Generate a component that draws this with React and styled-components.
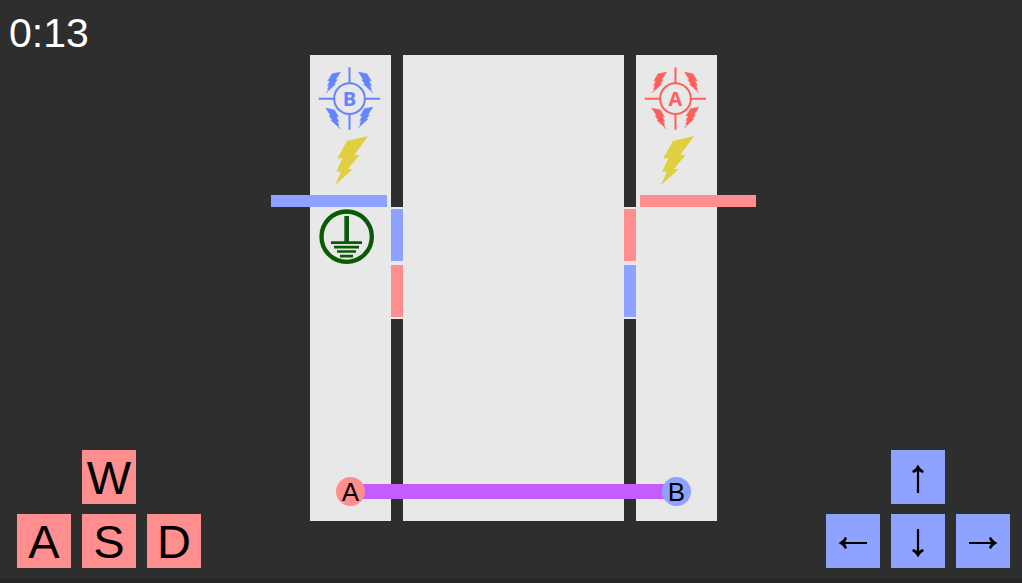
import React from "react";
import styled, { createGlobalStyle } from "styled-components";

const color = {
  floor: "#2e2e2e",
  edge: "#272727",
  lane: "#e8e8e8",
  red: "#ff8e8e",
  blue: "#8ea2ff",
  redIcon: "#ff5f5c",
  blueIcon: "#6384ff",
  rope: "#c45cff",
  bolt: "#e0d03f",
  ground: "#0a5a05",
};

const GlobalStyle = createGlobalStyle`
  *, *::before, *::after { box-sizing: border-box; }
  body {
    margin: 0;
    background: ${color.floor};
    font-family: "Liberation Sans", Arial, sans-serif;
  }
`;

const Page = styled.div`
  display: flex;
  flex-direction: column;
  min-height: 100vh;
  overflow: hidden;
  border-bottom: 4px solid ${color.edge};
`;

const Header = styled.header`
  padding: 8px 9px 0;
  height: 55px;
`;

const Timer = styled.time`
  display: block;
  color: #fff;
  font-size: 41px;
  line-height: 50px;
`;

const Stage = styled.main`
  flex: 1;
  display: grid;
  grid-template-columns: 1fr auto 1fr;
  padding: 0 12px 11px 17px;
`;

const KeyPad = styled.div`
  align-self: end;
  justify-self: ${(p) => p.$side};
  display: grid;
  grid-template-areas: ". up ." "left down right";
  gap: 10px 11px;
`;

const Key = styled.button`
  grid-area: ${(p) => p.$area};
  width: 54px;
  height: 54px;
  padding: 0;
  border: 0;
  background: ${(p) => color[p.$tone]};
  color: #000;
  font-family: inherit;
  font-size: 47px;
  line-height: 55px;
  text-align: center;
`;

const ArrowSvg = styled.svg`
  display: block;
  width: 54px;
  height: 54px;
`;

const Arena = styled.section`
  position: relative;
  align-self: start;
  display: grid;
  grid-template-columns: 81px 12px 221px 12px 81px;
  height: 466px;
`;

const Lane = styled.div`
  position: relative;
  display: flex;
  flex-direction: column;
  align-items: flex-start;
  padding: 12px 8px 0;
  background: ${color.lane};
`;

const Wall = styled.div`
  display: flex;
  flex-direction: column;
  background: ${color.floor};
`;

const Doorway = styled.div`
  display: flex;
  flex-direction: column;
  justify-content: space-between;
  height: 112px;
  margin-top: 152px;
  padding: 2px 0;
  background: ${color.lane};
`;

const Door = styled.div`
  height: 52px;
  background: ${(p) => color[p.$tone]};
`;

const Barrier = styled.div`
  position: absolute;
  top: 140px;
  ${(p) => p.$side}: -39px;
  width: 116px;
  height: 12px;
  background: ${(p) => color[p.$tone]};
`;

const TargetSvg = styled.svg`
  display: block;
  width: 63px;
  height: 63px;
`;

const TargetLetter = styled.text`
  font-family: "Open Sans", "Noto Sans", sans-serif;
  font-size: 20px;
  font-weight: 700;
  text-anchor: middle;
`;

const BoltSvg = styled.svg`
  display: block;
  width: 33px;
  height: 49px;
  margin: 6px 0 0 17px;
  overflow: visible;
`;

const GroundSvg = styled.svg`
  display: block;
  width: 56px;
  height: 56px;
  margin: 24px 0 0 1px;
`;

const Rope = styled.div`
  position: absolute;
  left: 41px;
  right: 41px;
  top: 429px;
  height: 15px;
  background: ${color.rope};
`;

const Player = styled.div`
  position: absolute;
  top: 422px;
  ${(p) => p.$side}: 26px;
  width: 29px;
  height: 29px;
  border-radius: 50%;
  background: ${(p) => color[p.$tone]};
  color: #000;
  font-size: 26px;
  line-height: 30px;
  text-align: center;
`;

const sparkPath =
  "M43 0 L17 5 L4 27 L11 26 L3 41 L9 40 L3 51 L7 51 L-1 63 L28 36 L23 36 L33 23 L28 23 Z";

function Target({ letter, tint }) {
  return (
    <TargetSvg viewBox="0 0 189 189" role="img" aria-label={`Target ${letter}`}>
      <g stroke={tint} strokeWidth="6" fill="none">
        <circle cx="94.5" cy="95" r="46" />
        <path d="M94.500 1V49M94.500 141V188M2 95.500H48M140 95.500H186" />
      </g>
      <g fill={tint} stroke={tint} strokeWidth="1">
        <path d={sparkPath} transform="translate(25 15)" />
        <path d={sparkPath} transform="translate(164 15) scale(-1 1)" />
        <path d={sparkPath} transform="translate(66 123) scale(-1 1)" />
        <path d={sparkPath} transform="translate(122 120)" />
      </g>
      <g fill={tint} transform="scale(3)">
        <TargetLetter x="31.500" y="39">
          {letter}
        </TargetLetter>
      </g>
    </TargetSvg>
  );
}

function Bolt() {
  return (
    <BoltSvg viewBox="0 0 99 147" aria-hidden="true">
      <path
        fill={color.bolt}
        d="M99 0 L36 15 L6 68 L22 66 L4 107 L18 107 L0 147 L53 100 L39 98 L74 57 L58 57 Z"
      />
    </BoltSvg>
  );
}

function Ground() {
  return (
    <GroundSvg viewBox="0 0 168 168" role="img" aria-label="Ground">
      <g stroke={color.ground} fill="none">
        <circle cx="83" cy="83" r="75.5" strokeWidth="13" />
        <path strokeWidth="14" d="M83 21V100" />
        <path
          strokeWidth="8"
          d="M36 101H129M45 114.500H120M54 127.500H111M63 141.500H102"
        />
      </g>
    </GroundSvg>
  );
}

const turns = { up: 0, right: 90, down: 180, left: 270 };

function ArrowKey({ direction }) {
  return (
    <Key $area={direction} $tone="blue" aria-label={direction}>
      <ArrowSvg viewBox="0 0 54 54" aria-hidden="true">
        <path
          transform={`rotate(${turns[direction]} 27 29)`}
          d="M27 14.500 C28.500 17.500 30.500 19.700 32.900 21 L31.900 23 C30.500 22.600 29.200 22 28.100 21.200 V43 H25.900 V21.200 C24.800 22 23.500 22.600 22.100 23 L21.100 21 C23.500 19.700 25.500 17.500 27 14.500 Z"
        />
      </ArrowSvg>
    </Key>
  );
}

export default function App() {
  return (
    <>
      <GlobalStyle />
      <Page>
        <Header>
          <Timer>0:13</Timer>
        </Header>
        <Stage>
          <KeyPad $side="start">
            <Key $area="up" $tone="red">W</Key>
            <Key $area="left" $tone="red">A</Key>
            <Key $area="down" $tone="red">S</Key>
            <Key $area="right" $tone="red">D</Key>
          </KeyPad>
          <Arena>
            <Lane>
              <Target letter="B" tint={color.blueIcon} />
              <Bolt />
              <Ground />
              <Barrier $side="left" $tone="blue" />
            </Lane>
            <Wall>
              <Doorway>
                <Door $tone="blue" />
                <Door $tone="red" />
              </Doorway>
            </Wall>
            <Lane />
            <Wall>
              <Doorway>
                <Door $tone="red" />
                <Door $tone="blue" />
              </Doorway>
            </Wall>
            <Lane>
              <Target letter="A" tint={color.redIcon} />
              <Bolt />
              <Barrier $side="right" $tone="red" />
            </Lane>
            <Rope />
            <Player $side="left" $tone="red">A</Player>
            <Player $side="right" $tone="blue">B</Player>
          </Arena>
          <KeyPad $side="end">
            <ArrowKey direction="up" />
            <ArrowKey direction="left" />
            <ArrowKey direction="down" />
            <ArrowKey direction="right" />
          </KeyPad>
        </Stage>
      </Page>
    </>
  );
}
